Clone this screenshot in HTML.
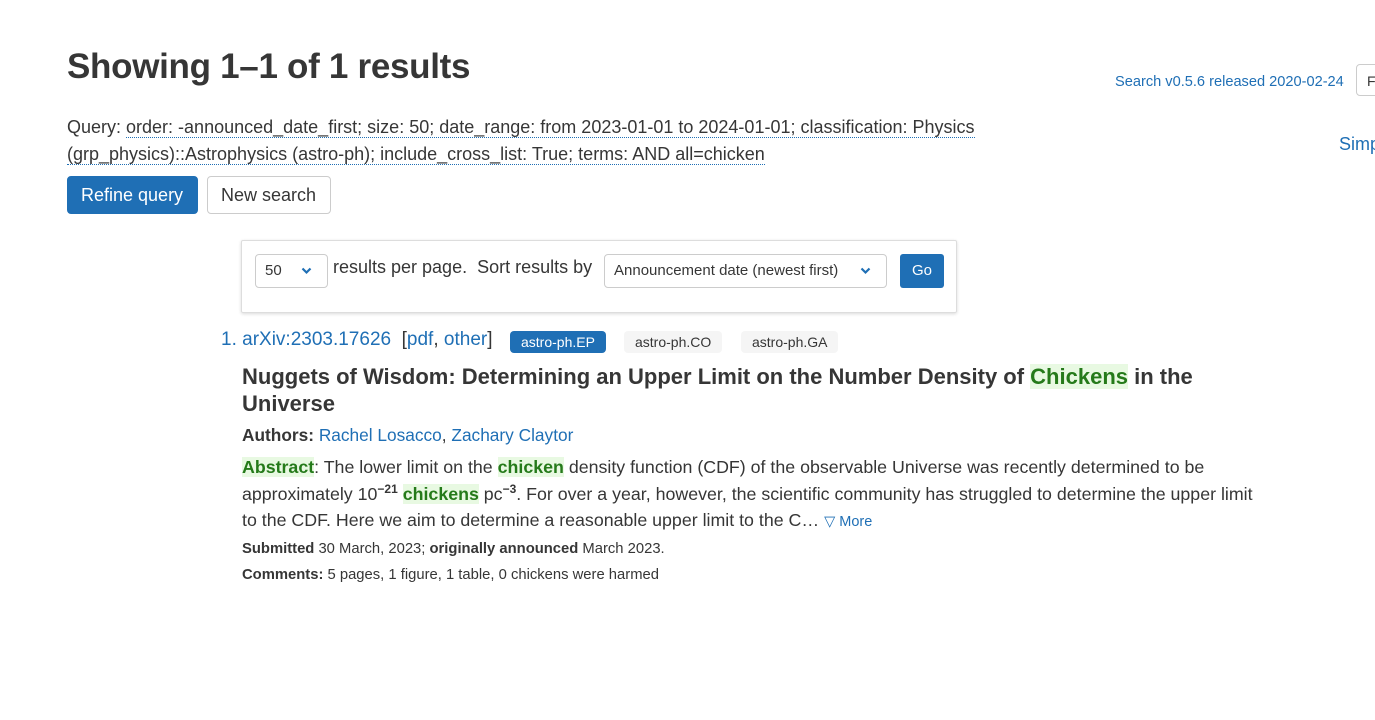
<!DOCTYPE html>
<html><head><meta charset="utf-8"><style>
body{margin:0;width:1375px;height:720px;overflow:hidden;background:#fff;font-family:"Liberation Sans",sans-serif;color:#363636;position:relative}
a{color:#1f6fb5;text-decoration:none}
.abs{position:absolute;white-space:nowrap}
h1{position:absolute;left:67px;top:47px;margin:0;font-size:35px;font-weight:bold;color:#363636;letter-spacing:-0.3px}
.q{position:absolute;left:67px;top:114px;font-size:18px;line-height:27px;width:930px}
.q span{border-bottom:1px dotted #1f6fb5}
.btn{position:absolute;top:176px;height:38px;box-sizing:border-box;border-radius:4px;font-size:18px;line-height:36px;padding:0 13px}
.box{position:absolute;left:241px;top:240px;width:716px;height:73px;box-sizing:border-box;border:1px solid #ddd;box-shadow:0 1px 3px rgba(0,0,0,.15);border-radius:2px}
.sel{position:absolute;border:1px solid #ccc;border-radius:4px;box-sizing:border-box;font-size:15px;color:#363636}
.chev{position:absolute;top:12px}
.tag{position:absolute;top:331px;height:22px;line-height:22px;border-radius:4px;font-size:14px;padding:0 11px;background:#f5f5f5;color:#363636}
.hl{background:#e8f9e2;color:#257a1a;font-weight:bold}
.t{position:absolute;left:242px;font-size:17.5px}
sup{font-size:12px;font-weight:bold;line-height:0;vertical-align:7px}
</style></head><body>
<h1>Showing 1–1 of 1 results</h1>
<div class="abs" style="left:1115px;top:74px;font-size:14.6px;color:#1f6fb5">Search v0.5.6 released 2020-02-24</div>
<div class="abs" style="left:1356px;top:64px;width:40px;height:32px;border:1px solid #ccc;border-radius:4px;font-size:14px;line-height:32px;padding-left:10px;box-sizing:border-box">F</div>
<div class="abs" style="left:1339px;top:134px;font-size:18px;color:#1f6fb5">Simp</div>
<div class="q">Query: <span>order: -announced_date_first; size: 50; date_range: from 2023-01-01 to 2024-01-01; classification: Physics (grp_physics)::Astrophysics (astro-ph); include_cross_list: True; terms: AND all=chicken</span></div>
<div class="btn" style="left:67px;width:131px;background:#1f6fb5;color:#fff;border:1px solid #1f6fb5">Refine query</div>
<div class="btn" style="left:207px;width:124px;background:#fff;color:#363636;border:1px solid #ccc">New search</div>
<div class="box"></div>
<div class="sel" style="left:255px;top:254px;width:73px;height:34px;line-height:32px;padding-left:9px">50<svg class="chev" style="left:45px" width="11" height="8" viewBox="0 0 11 8"><path d="M1.5 1.5 L5.5 5.5 L9.5 1.5" fill="none" stroke="#1f6fb5" stroke-width="2.2"/></svg></div>
<div class="abs" style="left:333px;top:257px;font-size:18px">results per page.&nbsp; Sort results by</div>
<div class="sel" style="left:604px;top:254px;width:283px;height:34px;line-height:32px;padding-left:9px">Announcement date (newest first)<svg class="chev" style="left:255px" width="11" height="8" viewBox="0 0 11 8"><path d="M1.5 1.5 L5.5 5.5 L9.5 1.5" fill="none" stroke="#1f6fb5" stroke-width="2.2"/></svg></div>
<div class="abs" style="left:900px;top:254px;width:44px;height:34px;background:#1f6fb5;color:#fff;border-radius:3px;font-size:15px;line-height:34px;text-align:center">Go</div>
<div class="abs" style="left:221px;top:329px;font-size:19px;color:#1f6fb5">1. <a>arXiv:2303.17626</a>&nbsp; <span style="color:#363636">[</span>pdf<span style="color:#363636">,</span> other<span style="color:#363636">]</span></div>
<div class="tag" style="left:510px;background:#1f6fb5;color:#fff">astro-ph.EP</div>
<div class="tag" style="left:624px">astro-ph.CO</div>
<div class="tag" style="left:741px">astro-ph.GA</div>
<div class="t" style="top:363px;font-size:22px;font-weight:bold;line-height:27px;width:1000px">Nuggets of Wisdom: Determining an Upper Limit on the Number Density of <span style="background:#e8f9e2;color:#257a1a">Chickens</span> in the Universe</div>
<div class="t" style="top:425px;font-size:17.3px"><b>Authors:</b> <a>Rachel Losacco</a>, <a>Zachary Claytor</a></div>
<div class="t" style="top:454px;line-height:26.5px;width:1030px;white-space:normal;font-size:17.8px"><span class="hl">Abstract</span>: The lower limit on the <span class="hl">chicken</span> density function (CDF) of the observable Universe was recently determined to be approximately 10<sup>−21</sup> <span class="hl">chickens</span> pc<sup>−3</sup>. For over a year, however, the scientific community has struggled to determine the upper limit to the CDF. Here we aim to determine a reasonable upper limit to the C… <a style="font-size:14.5px">▽ More</a></div>
<div class="t" style="top:541px;font-size:14.8px"><b>Submitted</b> 30 March, 2023; <b>originally announced</b> March 2023.</div>
<div class="t" style="top:567px;font-size:14.8px"><b>Comments:</b> 5 pages, 1 figure, 1 table, 0 chickens were harmed</div>
</body></html>
